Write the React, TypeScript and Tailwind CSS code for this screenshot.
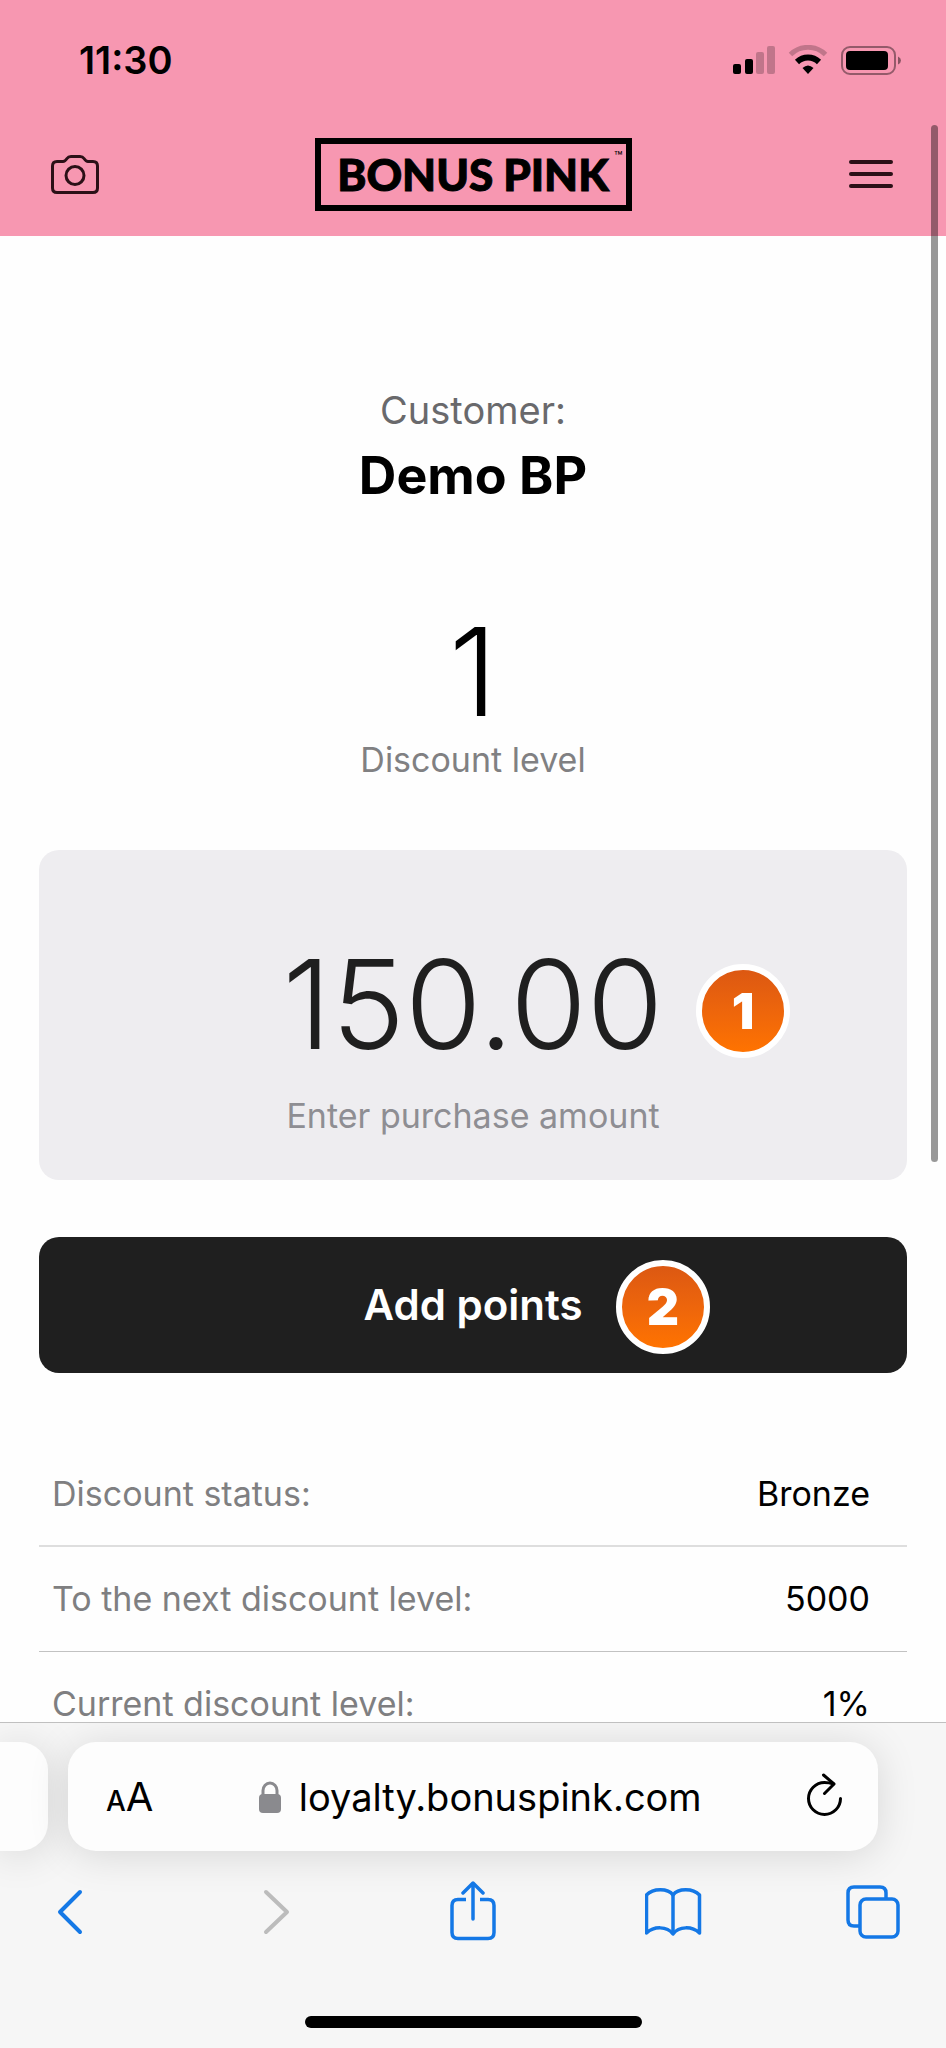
import { useState } from "react";

const rows = [
  { label: "Discount status:", value: "Bronze", line: "border-b-2 border-[#dedede]" },
  { label: "To the next discount level:", value: "5000", line: "border-b border-[#c2c2c2]" },
  { label: "Current discount level:", value: "1%", line: "" },
];

function StatusBar() {
  return (
    <div className="flex h-[120px] items-center justify-between pr-[44px] pl-[79px]">
      <span className="text-[38px] leading-[44px] font-semibold">11:30</span>
      <div className="flex items-center gap-3">
        <svg width="43" height="30" viewBox="0 0 43 30">
          <rect x="0" y="19" width="8" height="10" rx="2" />
          <rect x="12" y="14" width="8" height="15" rx="2" />
          <rect x="23" y="7" width="8" height="22" rx="2" fillOpacity="0.22" />
          <rect x="34" y="1" width="8" height="28" rx="2" fillOpacity="0.22" />
        </svg>
        <svg width="40" height="30" viewBox="0 0 40 30" fill="none" stroke="#000">
          <path d="M2.500 9.500A25 25 0 0 1 37.500 9.500" strokeWidth="5" strokeOpacity="0.22" />
          <path d="M9 17A16 16 0 0 1 31 17" strokeWidth="6" />
          <path d="M20 29l-5.500-6Q20 18 25.500 23z" fill="#000" stroke="none" />
        </svg>
        <svg width="62" height="30" viewBox="0 0 62 30">
          <rect x="2" y="2" width="53" height="27" rx="8" fill="none" stroke="#000" strokeOpacity="0.4" strokeWidth="2" />
          <rect x="6" y="6" width="42" height="19" rx="4" />
          <path d="M58 11.500q3 1.500 3 4t-3 4z" fillOpacity="0.45" />
        </svg>
      </div>
    </div>
  );
}

function Header() {
  return (
    <header className="h-[236px] shrink-0 bg-[#f797b1]">
      <StatusBar />
      <div className="flex h-[108px] items-center justify-between px-[51px]">
        <button type="button" aria-label="Scan" className="w-[48px]">
          <svg width="48" height="40" viewBox="0 0 48 40" fill="none" stroke="#2b1017" strokeWidth="3" strokeLinejoin="round">
            <path d="M6 7.500h6c2 0 3-1.500 4-3s2-2 4-2h9c2 0 3 .5 4 2s2 3 4 3h5q4.500 0 4.500 4.500v22q0 4.500-4.500 4.500H6q-4.500 0-4.500-4.500V12Q1.500 7.500 6 7.500z" />
            <circle cx="24" cy="21.500" r="9" />
          </svg>
        </button>
        <a href="#" className="relative flex h-[73px] w-[317px] items-center justify-center gap-[10px] border-[6px] border-black font-[Lato,sans-serif] text-[44px] leading-[52px] font-black [-webkit-text-stroke:1px_black]">
          <span>BONUS</span>
          <span>PINK</span>
          <span className="absolute top-[6px] right-[3px] font-[Inter,sans-serif] text-[14px] leading-[14px] font-normal [-webkit-text-stroke:0px]">™</span>
        </a>
        <button type="button" aria-label="Menu" className="flex w-[48px] flex-col items-center gap-2">
          <span className="h-1 w-[44px] rounded-full bg-[#2b1017]" />
          <span className="h-1 w-[44px] rounded-full bg-[#2b1017]" />
          <span className="h-1 w-[44px] rounded-full bg-[#2b1017]" />
        </button>
      </div>
    </header>
  );
}

function Badge({ step }: { step: number }) {
  return (
    <span className="flex size-[94px] items-center justify-center rounded-full border-[6px] border-white bg-linear-to-b from-[#dc5812] to-[#ff7300] text-[50px] leading-[60px] font-black text-white">
      {step}
    </span>
  );
}

function BrowserBar() {
  return (
    <footer className="relative shrink-0 overflow-hidden border-t border-[#c0c0c0] bg-[#f6f6f6] pt-[19px] pb-5">
      <div className="flex h-[109px] gap-5 pr-[68px]">
        <div className="w-12 rounded-r-[28px] bg-[#fdfdfd] shadow-[0_4px_40px_rgba(0,0,0,0.13)]" />
        <div className="flex flex-1 items-center justify-between rounded-[28px] bg-[#fdfdfd] pr-[34px] pl-[38px] shadow-[0_4px_40px_rgba(0,0,0,0.13)]">
          <button type="button" aria-label="Page settings" className="flex items-baseline pt-1">
            <span className="text-[28px] leading-[48px] font-medium">A</span>
            <span className="text-[40px] leading-[48px]">A</span>
          </button>
          <a href="#" className="flex items-center gap-[17px] text-[38px] leading-[48px]">
            <svg width="24" height="32" viewBox="0 0 24 32">
              <path d="M5 15V9.500a7 7.500 0 0 1 14 0V15" fill="none" stroke="#8a8a8e" strokeWidth="3" />
              <rect x="1" y="13" width="22" height="19" rx="4" fill="#8a8a8e" />
            </svg>
            loyalty.bonuspink.com
          </a>
          <button type="button" aria-label="Reload">
            <svg width="38" height="48" viewBox="0 0 38 48" fill="none" stroke="#000" strokeWidth="3" strokeLinecap="round" strokeLinejoin="round">
              <path d="M27.500 11Q23 9.500 18.500 9.500A16 16 0 1 0 34.500 25.500" />
              <path d="M17.500 2L28 11 18.500 20.500" />
            </svg>
          </button>
        </div>
      </div>

      <nav className="mt-[30px] flex justify-between px-10 text-[#1478e6]">
        <button type="button" aria-label="Back">
          <svg width="60" height="60" viewBox="0 0 60 60" fill="none" stroke="currentColor" strokeWidth="4" strokeLinecap="round" strokeLinejoin="round">
            <path d="M40 11L20 31l20 20" />
          </svg>
        </button>
        <button type="button" aria-label="Forward" disabled className="text-[#bcbcbc]">
          <svg width="60" height="60" viewBox="0 0 60 60" fill="none" stroke="currentColor" strokeWidth="4" strokeLinecap="round" strokeLinejoin="round">
            <path d="M24 11l21 20-21 20" />
          </svg>
        </button>
        <button type="button" aria-label="Share">
          <svg width="60" height="60" viewBox="0 0 60 60" fill="none" stroke="currentColor" strokeWidth="3.5" strokeLinejoin="round">
            <path d="M23 18.500h-8q-6 0-6 6v27q0 6 6 6h30q6 0 6-6v-27q0-6-6-6h-8" />
            <path d="M30 38V3M20 12L30 2l10 10" strokeLinecap="round" />
          </svg>
        </button>
        <button type="button" aria-label="Bookmarks">
          <svg width="60" height="60" viewBox="0 0 60 60" fill="none" stroke="currentColor" strokeWidth="3.5" strokeLinejoin="round">
            <path d="M28 14C23 7 8 7 1.500 14v38C9 45 22 45 28 53C34 45 47 45 54.500 52V14C48 7 33 7 28 14z" />
            <path d="M28 14v38" />
          </svg>
        </button>
        <button type="button" aria-label="Tabs">
          <svg width="60" height="60" viewBox="0 0 60 60" fill="none" stroke="currentColor" strokeWidth="3.5" strokeLinejoin="round">
            <rect x="14" y="18" width="38" height="38" rx="6" />
            <path d="M14 45H8q-6 0-6-6V12q0-6 6-6h26q6 0 6 6v6" />
          </svg>
        </button>
      </nav>
      <div className="mx-auto mt-[75px] h-3 w-[337px] rounded-full bg-black" />
    </footer>
  );
}

export default function App() {
  const [amount, setAmount] = useState("150.00");

  return (
    <div className="relative flex h-screen flex-col bg-[#fefefe] font-[Inter,sans-serif] text-black">
      <Header />

      <main className="min-h-0 flex-1 overflow-y-auto px-[39px] [scrollbar-width:none]">
        <section className="pt-[150px] text-center">
          <p className="text-[38px] leading-[48px] text-[#69696c]">Customer:</p>
          <h1 className="mt-[10px] text-[52px] leading-[64px] font-bold">Demo BP</h1>
          <p className="mt-[100px] text-[122px] leading-[128px] font-light">1</p>
          <p className="mt-[2px] text-[34px] leading-[44px] text-[#808082]">Discount level</p>
        </section>

        <form onSubmit={(e) => e.preventDefault()}>
          <div className="relative mt-[68px] rounded-[20px] bg-[#eeedf0] pt-[90px] pb-[42px] text-center">
            <input
              id="amount"
              type="text"
              inputMode="decimal"
              value={amount}
              onChange={(e) => setAmount(e.target.value)}
              className="block h-[128px] w-full bg-transparent text-center text-[124px] leading-[128px] font-light text-[#1f1f1f] focus:outline-none"
            />
            <label htmlFor="amount" className="mt-[26px] block text-[34px] leading-[44px] text-[#8e8e93]">
              Enter purchase amount
            </label>
            <div className="absolute top-[114px] left-1/2 ml-[223px]">
              <Badge step={1} />
            </div>
          </div>

          <button
            type="submit"
            className="relative mt-[57px] flex h-[136px] w-full items-center justify-center rounded-[20px] bg-[#1f1f1f] text-[42px] leading-[52px] font-semibold text-white"
          >
            Add points
            <span className="absolute top-[23px] left-1/2 ml-[143px]">
              <Badge step={2} />
            </span>
          </button>
        </form>

        <dl className="mt-[69px] text-[34px] leading-[34px]">
          {rows.map((row) => (
            <div key={row.label} className={`flex h-[105px] justify-between pt-[35px] pr-[37px] pl-[13px] ${row.line}`}>
              <dt className="text-[#7f7f81]">{row.label}</dt>
              <dd>{row.value}</dd>
            </div>
          ))}
        </dl>
      </main>

      <BrowserBar />

      {/* scroll indicator */}
      <div className="absolute top-[125px] right-2 h-[1037px] w-[7px] rounded-full bg-black/40" />
    </div>
  );
}
